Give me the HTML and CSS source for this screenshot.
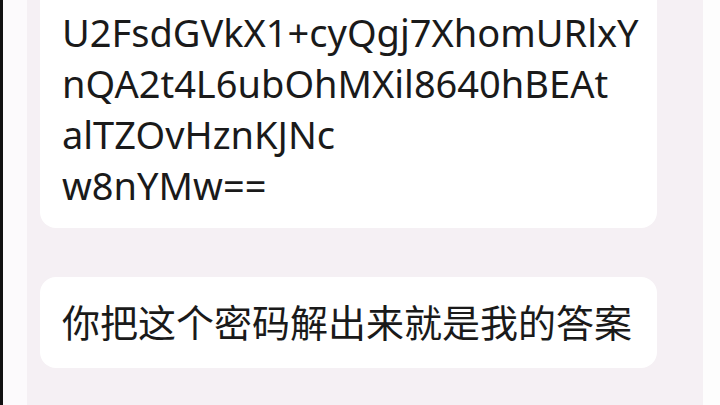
FILE: index.html
```html
<!DOCTYPE html>
<html lang="zh-CN">
<head>
<meta charset="utf-8">
<title>聊天</title>
<link rel="stylesheet" href="styles.css">
</head>
<body>
<div class="screen">
  <div class="edge"></div>
  <div class="gutter"></div>
  <main class="chat">
    <div class="thread">
      <div class="bubble bubble-code">
        <p class="line">U2FsdGVkX1+cyQgj7XhomURlxY</p>
        <p class="line">nQA2t4L6ubOhMXil8640hBEAt</p>
        <p class="line">alTZOvHznKJNc</p>
        <p class="line">w8nYMw==</p>
      </div>
      <div class="bubble">
        <p class="line">你把这个密码解出来就是我的答案</p>
      </div>
    </div>
  </main>
  <div class="rail"></div>
</div>
</body>
</html>
```
FILE: styles.css
```css
html, body {
  margin: 0;
  padding: 0;
  height: 100%;
  overflow: hidden;
  background: #ffffff;
}

.screen {
  display: flex;
  width: 720px;
  height: 405px;
  font-family: "Noto Sans", "Noto Sans CJK SC", sans-serif;
  color: #1a1a1a;
}

.edge {
  width: 3px;
  background: #111111;
}

.gutter {
  width: 24px;
  background: #fcfafc;
}

.rail {
  width: 17px;
  background: #fdfdfd;
}

.chat {
  flex: 1;
  background: #f5f0f4;
  padding: 0 46px 0 13px;
  overflow: hidden;
}

/* list is scrolled: the first bubble's top runs above the viewport */
.thread {
  display: flex;
  flex-direction: column;
  gap: 49px;
  margin-top: -20px;
}

.bubble {
  background: #ffffff;
  border-radius: 16px;
  padding: 20px 22px;
}

.bubble-code {
  padding-top: 27px;
  padding-bottom: 17px;
}

.line {
  margin: 0;
  font-size: 38px;
  line-height: 51px;
  white-space: nowrap;
}
```
